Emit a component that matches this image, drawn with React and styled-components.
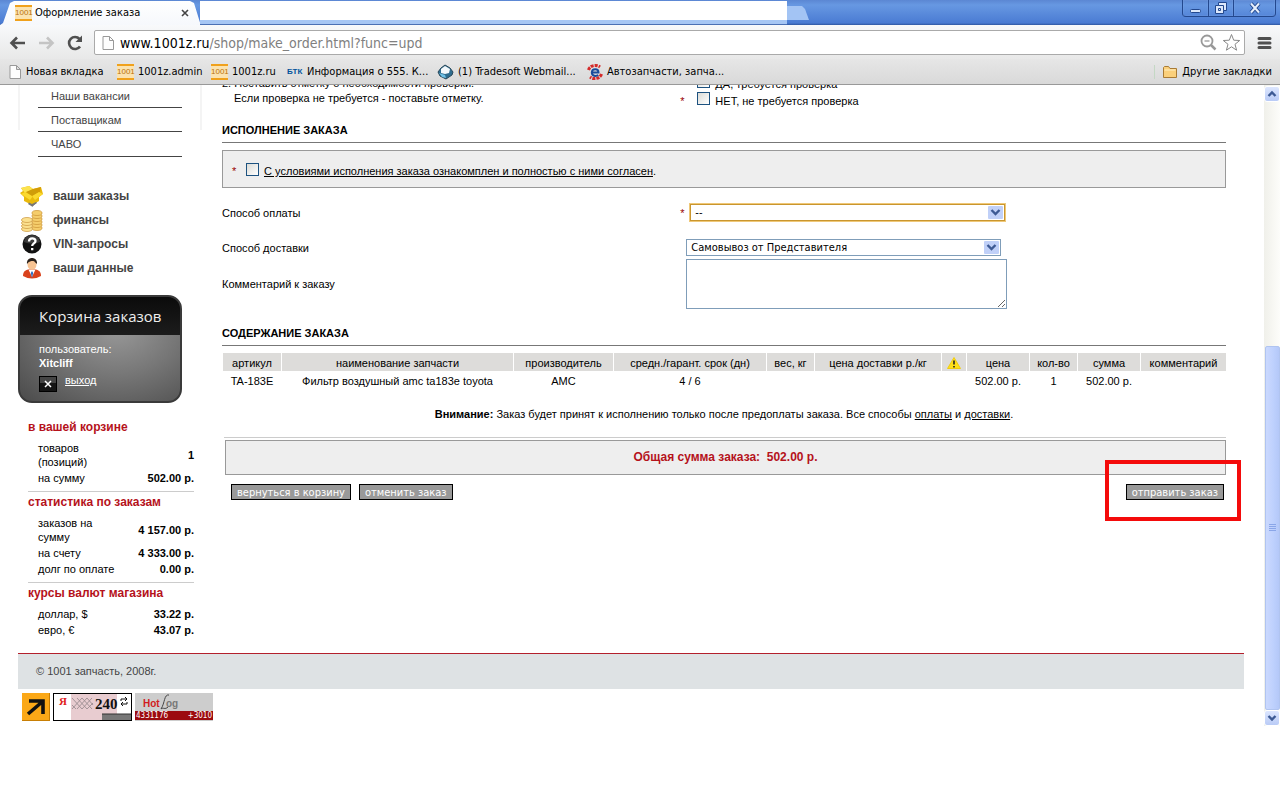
import React, { useState } from 'react';
import styled, { createGlobalStyle, css } from 'styled-components';

const GlobalStyle = createGlobalStyle`
  * {
    box-sizing: border-box;
  }

  body {
    margin: 0;
    background: #fff;
    color: #000;
    font-family: 'Liberation Sans', Arial, sans-serif;
    font-size: 11px;
    line-height: 14px;
  }

  a {
    color: inherit;
  }
`;

const uiFont = css`
  font-family: 'DejaVu Sans Condensed', 'DejaVu Sans', Tahoma, sans-serif;
`;

/* ---------- browser window ---------- */

const TabStrip = styled.div`
  ${uiFont}
  display: flex;
  align-items: flex-end;
  height: 25px;
  background: linear-gradient(#5b87d3, #6798e2 20%, #4a7bd3 92%, #2f56a0);
`;

const ActiveTab = styled.div`
  display: flex;
  align-items: center;
  gap: 3px;
  width: 200px;
  height: 24px;
  padding: 0 11px 0 15px;
  background: linear-gradient(#fff, #f6f8fc);
  clip-path: polygon(0 100%, 3px 92%, 10px 8%, 14px 0, 190px 0, 194px 8%, 200px 90%, 100% 100%);
`;

const TabTitle = styled.span`
  flex: 1;
  font-size: 11px;
`;

const PlainButton = styled.button`
  display: flex;
  align-items: center;
  justify-content: center;
  padding: 0;
  border: 0;
  background: none;
  color: inherit;
  cursor: pointer;
`;

const OtherTabs = styled.div`
  flex: 0 1 587px;
  height: 24px;
  background: #fff;
  border-bottom: 1px solid #4b70b4;
  box-shadow: inset 0 -4px #a6c6f4;
`;

const NewTab = styled(PlainButton)`
  align-self: flex-start;
  width: 22px;
  height: 14px;
  margin-top: 6px;
  background: #a3c4f4;
  clip-path: polygon(0 0, 15px 0, 18px 3px, 100% 100%, 0 100%);
`;

const WindowButtons = styled.div`
  display: flex;
  align-self: flex-start;
  height: 17px;
  margin-left: auto;
  margin-right: 4px;
  border: 1px solid #23488e;
  border-top: 0;
  border-radius: 0 0 4px 4px;
`;

const WindowButton = styled(PlainButton)`
  width: ${({ $wide }) => ($wide ? '42px' : '25px')};
  border-left: ${({ $first }) => ($first ? '0' : '1px solid #23488e')};
  box-shadow: inset 0 0 1px #a9c6f4;
`;

const Toolbar = styled.div`
  ${uiFont}
  display: flex;
  align-items: center;
  height: 34px;
  padding: 1px 8px 0 7px;
  background: linear-gradient(#f8f9fb, #e8e8e8);
`;

const NavButton = styled(PlainButton)`
  width: 20px;
  height: 20px;
  margin-right: 9px;
`;

const AddressBar = styled.div`
  display: flex;
  align-items: center;
  flex: 1;
  gap: 5px;
  height: 25px;
  margin-right: 12px;
  padding: 0 3px 0 6px;
  background: #fff;
  border: 1px solid #aaa;
  border-radius: 2px;
`;

const Address = styled.div`
  flex: 1;
  font-size: 14px;
  line-height: 18px;
  color: #808080;

  b {
    font-weight: normal;
    color: #000;
  }
`;

const Bookmarks = styled.nav`
  ${uiFont}
  display: flex;
  align-items: center;
  height: 26px;
  padding: 0 8px;
  background: linear-gradient(#e6e6e6, #d9d9d9);
  border-bottom: 1px solid #999;
`;

const Bookmark = styled.a`
  display: flex;
  align-items: center;
  gap: 4px;
  width: ${({ $width }) => $width};
  margin-left: ${({ $last }) => ($last ? 'auto' : '0')};
  padding-left: ${({ $last }) => ($last ? '7px' : '0')};
  border-left: ${({ $last }) => ($last ? '1px solid #c4d8c4' : '0')};
  white-space: nowrap;
  text-decoration: none;
`;

const Favicon = styled.span`
  flex: none;
  width: 17px;
  border: solid #f0a11c;
  border-width: 2px 0;
  background: #fbe3b0;
  color: #b8720a;
  font: 8px/12px 'Liberation Sans Narrow', 'Liberation Sans', sans-serif;
  text-align: center;
`;

const BtkIcon = styled.b`
  width: 16px;
  color: #00519b;
  font: bold 8px 'Liberation Sans', sans-serif;
`;

const Viewport = styled.div`
  display: flex;
`;

const Page = styled.div`
  flex: 1;
  min-width: 0;
  padding: 0 20px 1px 18px;
`;

const ScrollBar = styled.div`
  display: flex;
  flex-direction: column;
  width: 16px;
  padding-top: 1px;
  background: linear-gradient(90deg, #f0f0ea, #fdfdfa);
`;

const ScrollButton = styled(PlainButton)`
  height: 16px;
  border: 1px solid #fff;
  border-radius: 3px;
  background: linear-gradient(#dce6fe, #b9cbf6);
`;

const ScrollTrack = styled.div`
  flex: 244;
`;

const ScrollThumb = styled.div`
  display: flex;
  align-items: center;
  justify-content: center;
  flex: 363;
  margin-left: 1px;
  border: 1px solid #b0c4f0;
  border-radius: 2px;
  background: linear-gradient(90deg, #cbd9fe, #bdd0fd 60%, #b4c8f8);
`;

/* ---------- sidebar ---------- */

const Columns = styled.div`
  display: flex;
`;

const Sidebar = styled.aside`
  width: 184px;
`;

const MenuPanel = styled.div`
  height: 45px;
  border: solid #f4f4f4;
  border-width: 0 2px;
  padding: 0 18px;
`;

const MenuLink = styled.a`
  display: block;
  height: ${({ $height }) => $height};
  padding: ${({ $first }) => ($first ? '4px' : '5px')} 0 0 13px;
  border-bottom: 1px solid #444;
  color: #444;
  text-decoration: none;
`;

const AccountLinks = styled.div`
  display: flex;
  flex-direction: column;
  margin-top: 54px;
  padding-left: 2px;
`;

const AccountLink = styled.a`
  display: flex;
  align-items: center;
  gap: 9px;
  height: 24px;
  color: #444;
  font-size: 12px;
  font-weight: bold;
  text-decoration: none;

  svg {
    width: 24px;
    height: 24px;
  }
`;

const CartCard = styled.section`
  width: 164px;
  height: 108px;
  margin: 15px 0 14px;
  border: 2px solid #3a3a3a;
  border-radius: 14px;
  background:
    linear-gradient(#0b0b0b, #1c1c1c) top / 100% 38px no-repeat,
    radial-gradient(ellipse at 60% 30%, #999, #777 45%, #4a4a4a);
  color: #fff;
`;

const CartTitle = styled.h2`
  margin: 0;
  padding: 0 0 0 19px;
  color: #eee;
  font: 15px/38px 'Open Sans', 'Noto Sans', sans-serif;
  white-space: nowrap;
`;

const CartUser = styled.div`
  padding: 7px 0 0 19px;
`;

const Logout = styled.a`
  display: flex;
  gap: 8px;
  margin-top: 3px;

  svg {
    margin-top: 3px;
  }
`;

const Stats = styled.section`
  width: 166px;
  margin-left: 10px;
  padding: 2px 0 5px;
  border-bottom: ${({ $last }) => ($last ? '0' : '1px solid #ccc')};
`;

const StatsTitle = styled.h3`
  margin: 0 0 5px;
  color: #b5121b;
  font-size: 12px;
  line-height: 16px;
  white-space: nowrap;
`;

const StatsTable = styled.table`
  width: 100%;
  border-collapse: collapse;
  table-layout: fixed;

  th,
  td {
    padding: 1px 0;
    text-align: left;
    font-weight: normal;
  }

  th {
    width: 92px;
    padding-left: 10px;
  }

  td {
    text-align: right;
    font-weight: bold;
    white-space: nowrap;
  }
`;

/* ---------- order form ---------- */

const Main = styled.main`
  flex: 1;
  min-width: 0;
  padding: 0 18px 0 20px;
`;

const FormRow = styled.div`
  display: grid;
  grid-template-columns: 5fr 6fr;
  align-items: ${({ $top }) => ($top ? 'start' : 'center')};
  margin-top: ${({ $gap }) => $gap || '0'};
`;

const CutLine = styled.div`
  display: flex;
  align-items: flex-end;
  height: ${({ $height }) => $height};
  overflow: hidden;
`;

const Hint = styled.div`
  margin: 1px 0 0 12px;
`;

const Field = styled.div`
  display: flex;
  align-items: center;
  padding-left: ${({ $inset }) => ($inset ? '8px' : '2px')};
`;

const Required = styled.span`
  width: ${({ $wide }) => ($wide ? '17px' : '10px')};
  color: #900;
`;

const Checkbox = styled.input.attrs({ type: 'checkbox' })`
  appearance: none;
  width: 13px;
  height: 13px;
  margin: 0 5px 4px 0;
  border: 1px solid #1d5280;
  background: linear-gradient(135deg, #dcdcd7, #fff);

  &:checked {
    background: #21a121;
  }
`;

const SectionTitle = styled.h2`
  margin: ${({ $gap }) => $gap} 0 7px;
  padding-bottom: 5px;
  border-bottom: 1px solid #777;
  font-size: 11px;
  line-height: 14px;
`;

const Agreement = styled.div`
  display: flex;
  align-items: center;
  height: 38px;
  padding: 4px 9px 0;
  border: 1px solid #999;
  background: #eee;

  span {
    width: 14px;
  }
`;

const SelectBox = styled.div`
  position: relative;
  width: 315px;

  svg {
    position: absolute;
    top: 2px;
    right: 2px;
    pointer-events: none;
  }
`;

const Select = styled.select`
  ${uiFont}
  display: block;
  appearance: none;
  width: 100%;
  height: 17px;
  padding: 0 4px;
  border: 1px solid ${({ $active }) => ($active ? '#c9962f' : '#7f9db9')};
  border-radius: 0;
  outline: ${({ $active }) => ($active ? '1px solid #efc878' : 'none')};
  background: #fff;
  color: #000;
  font-size: 11px;
  line-height: 15px;
`;

const Comment = styled.textarea`
  display: block;
  width: 321px;
  height: 50px;
  border: 1px solid #7f9db9;
  outline: none;
`;

const OrderTable = styled.table`
  width: 100%;
  table-layout: fixed;
  border-collapse: separate;
  border-spacing: 1px 0;
  text-align: center;
  white-space: nowrap;

  th {
    height: 18px;
    padding: 2px 0 0;
    background: #dddcda;
    font-weight: normal;
  }

  td {
    height: 19px;
    padding: 1px 0 0;
  }

  svg {
    display: block;
    margin: 0 auto;
  }
`;

const Notice = styled.p`
  margin: 17px 0 16px;
  text-align: center;
`;

const TotalWrap = styled.div`
  margin-left: 2px;
  padding: 2px 0 0 1px;
  border-top: 1px solid #ccc;
`;

const Total = styled.div`
  border: 1px solid #999;
  background: #eee;
  color: #b5121b;
  font-size: 12px;
  font-weight: bold;
  line-height: 33px;
  text-align: center;
`;

const Actions = styled.div`
  display: flex;
  gap: 8px;
  padding: 9px 2px 0 9px;
`;

const ActionButton = styled.button`
  ${uiFont}
  height: 16px;
  padding: 0 5px;
  border: 1px solid #000;
  background: #999;
  color: #fff;
  font-size: 11px;
  line-height: 13px;
  cursor: pointer;
`;

const SubmitWrap = styled.div`
  position: relative;
  display: flex;
  margin-left: auto;
`;

const Highlight = styled.div`
  position: absolute;
  inset: -24px -17px -21px -21px;
  border: 4px solid #f40b0b;
  pointer-events: none;
`;

/* ---------- footer ---------- */

const Footer = styled.footer`
  height: 36px;
  margin-top: 10px;
  padding: 10px 18px;
  border-top: 1px solid #b3202c;
  background: #dee2e4;
  color: #444;
`;

const Counters = styled.div`
  display: flex;
  gap: 3px;
  padding: 4px;

  svg {
    display: block;
  }
`;

const DocIcon = () => (
  <svg width="14" height="16" viewBox="0 0 14 16">
    <path d="M2 1.5h6.5l4 4v9H2zM8.5 1.5v4h4" fill="#fdfdfd" stroke="#999" />
  </svg>
);

const OneIcon = () => <Favicon>1001</Favicon>;

const MailIcon = () => (
  <svg width="17" height="16" viewBox="0 0 17 16">
    <path d="M1 8l3-4 4-3 5 3 3 4-1 3-6 4-6-3z" fill="#2f6d8f" stroke="#28485a" />
    <path d="M4 5l4-3 5 3-1 4-4 1-4-1z" fill="#f4f9fc" />
    <path d="M2 9l6 2 1 3-4-1z" fill="#6fc1e6" />
  </svg>
);

const PartsIcon = () => (
  <svg width="16" height="16" viewBox="0 0 16 16">
    <path d="M1.5 6A7 6 0 0 1 13 3M14.5 10A7 6 0 0 1 3 13" fill="none" stroke="#d42a2a" strokeWidth="3" strokeDasharray="3 1" />
    <path d="M5 8.5h6.5C11.5 4 5 4 4.800 8.500c0 4 4.500 4 6.500 2.500" fill="none" stroke="#1a4c9c" strokeWidth="2" />
  </svg>
);

const FolderIcon = () => (
  <svg width="16" height="14" viewBox="0 0 16 14">
    <path d="M1.500 12.500v-10l1-1h4l1.500 2h6.500v9z" fill="#fbd07b" stroke="#a97b35" />
    <path d="M2.500 5h11" stroke="#fff0c4" />
  </svg>
);

const BackIcon = ({ color }) => (
  <svg width="17" height="14" viewBox="0 0 17 14">
    <path d="M16 7H3M8 1.500L2.500 7 8 12.500" fill="none" stroke={color} strokeWidth="2.600" />
  </svg>
);

const ForwardIcon = ({ color }) => (
  <svg width="17" height="14" viewBox="0 0 17 14">
    <path d="M1 7h13M9 1.500L14.500 7 9 12.500" fill="none" stroke={color} strokeWidth="2.600" />
  </svg>
);

const ReloadIcon = () => (
  <svg width="16" height="16" viewBox="0 0 16 16">
    <path d="M13 11.500A6 6 0 1 1 12.500 4" fill="none" stroke="#505050" strokeWidth="2.600" />
    <path d="M15 0.500V7H8.500z" fill="#505050" />
  </svg>
);

const Chevron = ({ up }) => (
  <svg width="10" height="8" viewBox="0 0 10 8">
    <path d={up ? 'M1.500 6L5 2.500 8.500 6' : 'M1.500 2L5 5.500 8.500 2'} fill="none" stroke="#3d5a94" strokeWidth="2.400" />
  </svg>
);

const SelectArrow = () => (
  <svg width="15" height="13" viewBox="0 0 15 13">
    <rect width="15" height="13" rx="1" fill="#c0d0f8" />
    <path d="M3.500 4l4 4 4-4" fill="none" stroke="#3d5a94" strokeWidth="2.400" />
  </svg>
);

const WarningIcon = () => (
  <svg width="14" height="12" viewBox="0 0 14 12">
    <path d="M7 .500l6.500 11H.500z" fill="#ffe01a" stroke="#f0cc10" />
    <path d="M7 3.500v4M7 9v1.500" stroke="#222" strokeWidth="1.600" />
  </svg>
);

const BoxIcon = () => (
  <svg viewBox="0 0 24 24">
    <path d="M12 20l-4-2 4-2 5 2-5 5z" fill="#777" />
    <path d="M1 4l8-2 4 3 8-2 2 7-4 3v4l-7 4-8-4v-4l-4-4 3-2z" fill="#e9b90c" />
    <path d="M1 4l8-2 4 3-8 4z" fill="#fce34e" />
    <path d="M13 5l8-2-1 5-7 3z" fill="#d49b06" />
    <path d="M1 10l4-2 8 4-3 4zM23 10l-4-2-7 4 3 4z" fill="#fbd92e" />
    <path d="M6 8l7-3 5 3-6 4z" fill="#cf9d0a" />
    <path d="M9 18.500l3 1.500 4-2 1 1-5 3.500-4-2.500z" fill="#777" />
  </svg>
);

const CoinsIcon = () => (
  <svg viewBox="0 0 24 24">
    {[20, 17, 14, 11, 8, 5].map((y) => (
      <ellipse key={y} cx="17" cy={y} rx="5" ry="2.500" fill="#f5cd6b" stroke="#cf9a3c" strokeWidth=".8" />
    ))}
    {[21, 18, 15, 12].map((y) => (
      <ellipse key={y} cx="7" cy={y} rx="5.500" ry="2.500" fill="#fbe08e" stroke="#d0a04a" strokeWidth=".8" />
    ))}
  </svg>
);

const QuestionIcon = () => (
  <svg viewBox="0 0 24 24">
    <circle cx="12" cy="12" r="9.500" fill="#111" />
    <path d="M4 10a8 7 0 0 1 16 0q-8 3-16 0" fill="#3b3b3b" />
    <path d="M9 9.500c0-4 6.500-4 6.500-.500 0 2.500-3.300 2.300-3.300 5M12.200 16v2.200" fill="none" stroke="#fff" strokeWidth="2.300" />
  </svg>
);

const UserIcon = () => (
  <svg viewBox="0 0 24 24">
    <path d="M3 20c0-5 3-7 9-7s9 2 9 7q-9 5-18 0z" fill="#d9421c" />
    <path d="M8.500 13.500L12 21l3.500-7.500z" fill="#fff" />
    <path d="M12 15l1.200 2-1.200 5-1.200-5z" fill="#2b6cc4" />
    <ellipse cx="12" cy="8.500" rx="4.500" ry="5.300" fill="#f7c392" />
    <path d="M7 8c-1-8 11-8 10 0-2-1-2-3-4-3s-4 0-6 3z" fill="#2a211b" />
  </svg>
);

const ExitIcon = () => (
  <svg width="18" height="16" viewBox="0 0 18 16">
    <rect x=".5" y=".5" width="17" height="15" fill="#151515" stroke="#000" />
    <path d="M1 1h16v6H1z" fill="#444" />
    <path d="M6 5l6 6M12 5l-6 6" stroke="#fff" strokeWidth="1.500" />
  </svg>
);

const ArrowCounter = () => (
  <svg width="28" height="28" viewBox="0 0 28 28">
    <rect width="28" height="28" fill="#c87f05" />
    <rect width="27" height="27" fill="#fba817" />
    <path d="M7 8h14v13M20 9L6 21" fill="none" stroke="#111" strokeWidth="3.600" />
  </svg>
);

const YandexCounter = () => (
  <svg width="79" height="28" viewBox="0 0 79 28">
    <rect x=".5" y=".5" width="78" height="27" fill="#fff" stroke="#000" />
    <rect x="18" y="1" width="46" height="26" fill="#e8ccd0" />
    <path d="M19 5l10 11M24 5l10 11M29 5l10 11M34 5l6 7M19 12l4 4M29 5L19 16M34 5L24 16M39 5L29 16M40 10l-6 6" stroke="#93868a" strokeWidth=".8" />
    <rect x="49" y="21" width="29" height="6" fill="#777" />
    <path d="M49 21h29" stroke="#333" />
    <text x="6" y="12" fill="#e01b1b" fontFamily="Liberation Serif" fontSize="11" fontWeight="bold">Я</text>
    <text x="42" y="16" fill="#111" fontFamily="Liberation Sans Narrow, Liberation Serif" fontSize="15" fontWeight="bold">240</text>
    <path d="M68 8V6h6M72 4l2 2-2 2M74 9v2h-6M70 9l-2 2 2 2" fill="none" stroke="#111" />
  </svg>
);

const HotlogCounter = () => (
  <svg width="78" height="28" viewBox="0 0 78 28">
    <rect width="78" height="28" fill="#cdcdcd" />
    <rect y="18" width="78" height="9" fill="#9c0b0f" />
    <text x="8" y="14" fill="#d11b20" fontFamily="Liberation Sans" fontSize="10" fontWeight="bold">Hot</text>
    <path d="M34 2c-5-1-4 8-8 14 2-2 4 1 7-2" fill="none" stroke="#444" />
    <text x="31" y="14" fill="#777" fontFamily="Liberation Sans" fontSize="10" fontWeight="bold">og</text>
    <text x="1" y="25" fill="#fff" fontFamily="DejaVu Sans Condensed" fontSize="8">4331176</text>
    <text x="77" y="25" fill="#fff" fontFamily="DejaVu Sans Condensed" fontSize="8" textAnchor="end">+3010</text>
  </svg>
);

const bookmarks = [
  { title: 'Новая вкладка', icon: <DocIcon />, width: '109px' },
  { title: '1001z.admin', icon: <OneIcon />, width: '94px' },
  { title: '1001z.ru', icon: <OneIcon />, width: '76px' },
  { title: 'Информация о 555. К...', icon: <BtkIcon>БТК</BtkIcon>, width: '150px' },
  { title: '(1) Tradesoft Webmail...', icon: <MailIcon />, width: '150px' },
  { title: 'Автозапчасти, запча...', icon: <PartsIcon />, width: '150px' },
];

const menuLinks = [
  { title: 'Наши вакансии', height: '23px' },
  { title: 'Поставщикам', height: '24px' },
  { title: 'ЧАВО', height: '25px' },
];

const accountLinks = [
  { title: 'ваши заказы', icon: <BoxIcon /> },
  { title: 'финансы', icon: <CoinsIcon /> },
  { title: 'VIN-запросы', icon: <QuestionIcon /> },
  { title: 'ваши данные', icon: <UserIcon /> },
];

const stats = [
  {
    title: 'в вашей корзине',
    rows: [
      ['товаров (позиций)', '1'],
      ['на сумму', '502.00 р.'],
    ],
  },
  {
    title: 'статистика по заказам',
    rows: [
      ['заказов на сумму', '4 157.00 р.'],
      ['на счету', '4 333.00 р.'],
      ['долг по оплате', '0.00 р.'],
    ],
  },
  {
    title: 'курсы валют магазина',
    rows: [
      ['доллар, $', '33.22 р.'],
      ['евро, €', '43.07 р.'],
    ],
  },
];

const columns = [
  { title: 'артикул', width: 58, value: 'TA-183E' },
  { title: 'наименование запчасти', width: 231, value: 'Фильтр воздушный amc ta183e toyota' },
  { title: 'производитель', width: 99, value: 'AMC' },
  { title: 'средн./гарант. срок (дн)', width: 152, value: '4 / 6' },
  { title: 'вес, кг', width: 47, value: '' },
  { title: 'цена доставки р./кг', width: 126, value: '' },
  { title: <WarningIcon />, width: 24, value: '' },
  { title: 'цена', width: 62, value: '502.00 р.' },
  { title: 'кол-во', width: 47, value: '1' },
  { title: 'сумма', width: 62, value: '502.00 р.' },
  { title: 'комментарий', width: 85, value: '' },
];

const BrowserChrome = () => (
  <header>
    <TabStrip>
      <ActiveTab>
        <OneIcon />
        <TabTitle>Оформление заказа</TabTitle>
        <PlainButton aria-label="Закрыть вкладку">
          <svg width="8" height="8" viewBox="0 0 8 8">
            <path d="M1 1l6 6M7 1L1 7" stroke="#444" strokeWidth="1.600" />
          </svg>
        </PlainButton>
      </ActiveTab>
      <OtherTabs />
      <NewTab aria-label="Новая вкладка" />
      <WindowButtons>
        <WindowButton $first aria-label="Свернуть">
          <svg width="12" height="12" viewBox="0 0 12 12">
            <rect x=".5" y="7.500" width="10" height="3" rx="1" fill="#dce8fb" stroke="#23488e" />
          </svg>
        </WindowButton>
        <WindowButton aria-label="Развернуть">
          <svg width="14" height="14" viewBox="0 0 14 14">
            <path d="M4.500 1.500h8v8h-3v3h-8v-8h3z" fill="#dce8fb" stroke="#23488e" />
            <path d="M4.500 4.500h5v5M4.500 7.500h2v2h-2z" fill="none" stroke="#23488e" />
          </svg>
        </WindowButton>
        <WindowButton $wide aria-label="Закрыть">
          <svg width="12" height="12" viewBox="0 0 12 12">
            <path d="M2 1.500l8 9M10 1.500l-8 9" stroke="#23488e" strokeWidth="4" />
            <path d="M2 1.500l8 9M10 1.500l-8 9" stroke="#e6effc" strokeWidth="2" />
          </svg>
        </WindowButton>
      </WindowButtons>
    </TabStrip>
    <Toolbar>
      <NavButton aria-label="Назад"><BackIcon color="#505050" /></NavButton>
      <NavButton aria-label="Вперёд"><ForwardIcon color="#c4c4c4" /></NavButton>
      <NavButton aria-label="Обновить"><ReloadIcon /></NavButton>
      <AddressBar>
        <DocIcon />
        <Address><b>www.1001z.ru</b>/shop/make_order.html?func=upd</Address>
        <PlainButton aria-label="Масштаб">
          <svg width="17" height="17" viewBox="0 0 17 17">
            <circle cx="7" cy="7" r="5.500" fill="none" stroke="#999" strokeWidth="1.800" />
            <path d="M4.500 7h5" stroke="#999" strokeWidth="1.300" />
            <path d="M11 11l4.500 4.500" stroke="#999" strokeWidth="2.500" />
          </svg>
        </PlainButton>
        <PlainButton aria-label="В закладки">
          <svg width="19" height="19" viewBox="0 0 19 19">
            <path d="M9.500 1.500l2.200 5.700 6 .300-4.700 3.800 1.600 5.900-5.100-3.400-5.100 3.400L6 11.300 1.300 7.500l6-.300z" fill="#fff" stroke="#888" />
          </svg>
        </PlainButton>
      </AddressBar>
      <PlainButton aria-label="Меню">
        <svg width="15" height="14" viewBox="0 0 15 14">
          <path d="M2 2.500h11M2 7h11M2 11.500h11" stroke="#505050" strokeWidth="3" strokeLinecap="round" />
        </svg>
      </PlainButton>
    </Toolbar>
    <Bookmarks>
      {bookmarks.map((item) => (
        <Bookmark key={item.title} href="#" $width={item.width}>
          {item.icon}
          {item.title}
        </Bookmark>
      ))}
      <Bookmark href="#" $last>
        <FolderIcon />
        Другие закладки
      </Bookmark>
    </Bookmarks>
  </header>
);

const SideColumn = () => (
  <Sidebar>
    <MenuPanel>
      {menuLinks.map((item, index) => (
        <MenuLink key={item.title} href="#" $height={item.height} $first={index === 0}>
          {item.title}
        </MenuLink>
      ))}
    </MenuPanel>
    <AccountLinks>
      {accountLinks.map((item) => (
        <AccountLink key={item.title} href="#">
          {item.icon}
          {item.title}
        </AccountLink>
      ))}
    </AccountLinks>
    <CartCard>
      <CartTitle>Корзина заказов</CartTitle>
      <CartUser>
        пользователь:
        <br />
        <b>Xitcliff</b>
        <Logout href="#">
          <ExitIcon />
          выход
        </Logout>
      </CartUser>
    </CartCard>
    {stats.map((group, index) => (
      <Stats key={group.title} $last={index === stats.length - 1}>
        <StatsTitle>{group.title}</StatsTitle>
        <StatsTable>
          <tbody>
            {group.rows.map(([name, value]) => (
              <tr key={name}>
                <th scope="row">{name}</th>
                <td>{value}</td>
              </tr>
            ))}
          </tbody>
        </StatsTable>
      </Stats>
    ))}
  </Sidebar>
);

const OrderForm = () => {
  const [agreed, setAgreed] = useState(false);
  const [skipCheck, setSkipCheck] = useState(false);
  const [payment, setPayment] = useState('--');

  return (
    <Main>
      <FormRow $top>
        <div>
          <CutLine $height="5px">2. Поставить отметку о необходимости проверки.</CutLine>
          <Hint>Если проверка не требуется - поставьте отметку.</Hint>
        </div>
        <div>
          <CutLine $height="7px">
            <Field>
              <Required $wide />
              <Checkbox id="check-yes" />
              <label htmlFor="check-yes">ДА, требуется проверка</label>
            </Field>
          </CutLine>
          <Field>
            <Required $wide>*</Required>
            <Checkbox id="check-no" checked={skipCheck} onChange={() => setSkipCheck(!skipCheck)} />
            <label htmlFor="check-no">НЕТ, не требуется проверка</label>
          </Field>
        </div>
      </FormRow>

      <SectionTitle $gap="14px">ИСПОЛНЕНИЕ ЗАКАЗА</SectionTitle>
      <Agreement>
        <Required>*</Required>
        <Checkbox id="agree" checked={agreed} onChange={() => setAgreed(!agreed)} />
        <label htmlFor="agree">
          <a href="#">С условиями исполнения заказа ознакомплен и полностью с ними согласен</a>.
        </label>
      </Agreement>

      <FormRow $gap="16px">
        <label htmlFor="payment">Способ оплаты</label>
        <Field>
          <Required>*</Required>
          <SelectBox>
            <Select id="payment" $active value={payment} onChange={(e) => setPayment(e.target.value)}>
              <option>--</option>
            </Select>
            <SelectArrow />
          </SelectBox>
        </Field>
      </FormRow>
      <FormRow $gap="18px">
        <label htmlFor="delivery">Способ доставки</label>
        <Field $inset>
          <SelectBox>
            <Select id="delivery">
              <option>Самовывоз от Представителя</option>
            </Select>
            <SelectArrow />
          </SelectBox>
        </Field>
      </FormRow>
      <FormRow $gap="3px">
        <label htmlFor="comment">Комментарий к заказу</label>
        <Field $inset>
          <Comment id="comment" />
        </Field>
      </FormRow>

      <SectionTitle $gap="17px">СОДЕРЖАНИЕ ЗАКАЗА</SectionTitle>
      <OrderTable>
        <colgroup>
          {columns.map((column, index) => (
            <col key={index} style={{ width: column.width }} />
          ))}
        </colgroup>
        <thead>
          <tr>
            {columns.map((column, index) => (
              <th key={index} scope="col">{column.title}</th>
            ))}
          </tr>
        </thead>
        <tbody>
          <tr>
            {columns.map((column, index) => (
              <td key={index}>{column.value}</td>
            ))}
          </tr>
        </tbody>
      </OrderTable>

      <Notice>
        <b>Внимание:</b> Заказ будет принят к исполнению только после предоплаты заказа. Все способы{' '}
        <a href="#">оплаты</a> и <a href="#">доставки</a>.
      </Notice>
      <TotalWrap>
        <Total>Общая сумма заказа:&nbsp; 502.00 р.</Total>
      </TotalWrap>
      <Actions>
        <ActionButton>вернуться в корзину</ActionButton>
        <ActionButton>отменить заказ</ActionButton>
        <SubmitWrap>
          <ActionButton>отправить заказ</ActionButton>
          <Highlight />
        </SubmitWrap>
      </Actions>
    </Main>
  );
};

const App = () => (
  <>
    <GlobalStyle />
    <BrowserChrome />
    <Viewport>
      <Page>
        <Columns>
          <SideColumn />
          <OrderForm />
        </Columns>
        <Footer>© 1001 запчасть, 2008г.</Footer>
        <Counters>
          <ArrowCounter />
          <YandexCounter />
          <HotlogCounter />
        </Counters>
      </Page>
      <ScrollBar>
        <ScrollButton aria-label="Вверх"><Chevron up /></ScrollButton>
        <ScrollTrack />
        <ScrollThumb>
          <svg width="7" height="8" viewBox="0 0 7 8">
            <path d="M0 .500h7M0 2.500h7M0 4.500h7M0 6.500h7" stroke="#8aa6e8" />
          </svg>
        </ScrollThumb>
        <ScrollButton aria-label="Вниз"><Chevron /></ScrollButton>
      </ScrollBar>
    </Viewport>
  </>
);

export default App;
